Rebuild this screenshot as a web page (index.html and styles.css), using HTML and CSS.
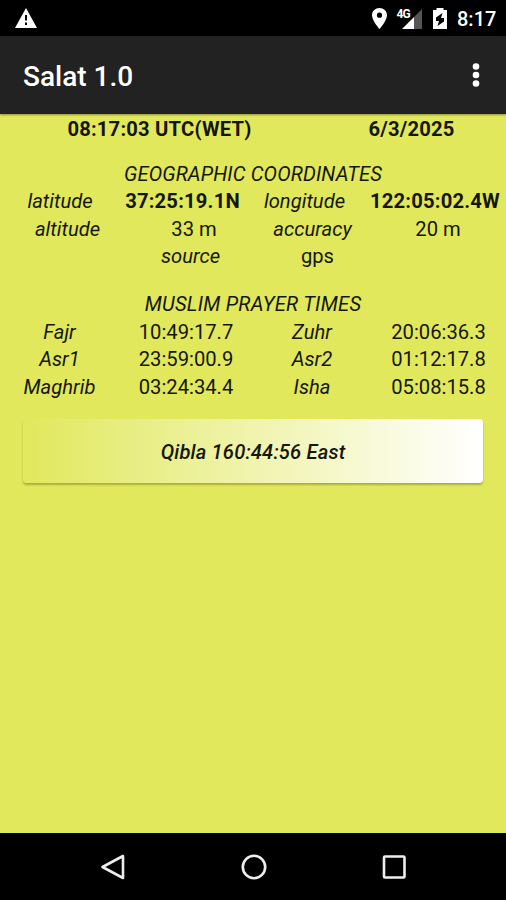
FILE: index.html
```html
<!DOCTYPE html>
<html lang="en">
<head>
<meta charset="utf-8">
<title>Salat 1.0</title>
<link rel="stylesheet" href="styles.css">
</head>
<body>
<div class="status">
  <svg class="warn" width="22" height="20" viewBox="0 0 22 20"><path fill="#fff" fill-rule="evenodd" d="M11 0L22 20H0ZM10 7V12.500H12V7ZM10 14.500V17H12V14.500Z"/></svg>
  <svg class="signals" width="78" height="24" viewBox="0 0 78 24">
    <path fill="#fff" fill-rule="evenodd" d="M7.500 2C3.400 2 0 5.100 0 9.200C0 14.500 7.500 23 7.500 23S15 14.500 15 9.200C15 5.100 11.600 2 7.500 2ZM7.500 6.600A2.600 2.600 0 1 1 7.500 11.800A2.600 2.600 0 1 1 7.500 6.600Z"/>
    <path fill="#555" d="M50 3V23H42V11Z"/>
    <path fill="#fff" d="M42 11V23H30Z"/>
    <text x="24.500" y="12" class="network">4G</text>
    <path fill="#fff" fill-rule="evenodd" d="M61 4H64.500V2H71.500V4H75V23H61ZM70.500 7L64 11.500V15H67L65.500 20L72 15.500V12H69Z"/>
  </svg>
  <span class="clock">8:17</span>
</div>
<header class="appbar">
  <h1>Salat 1.0</h1>
  <svg width="8" height="26" viewBox="0 0 8 26" fill="#fff"><circle cx="4" cy="4.500" r="3.300"/><circle cx="4" cy="13" r="3.300"/><circle cx="4" cy="21.500" r="3.300"/></svg>
</header>
<main>
  <div class="row time"><b>08:17:03 UTC(WET)</b><b>6/3/2025</b></div>
  <h2 class="geo">GEOGRAPHIC COORDINATES</h2>
  <div class="row position"><i>latitude</i><b>37:25:19.1N</b><i>longitude</i><b>122:05:02.4W</b></div>
  <div class="row altitude"><i>altitude</i><span>33 m</span><i>accuracy</i><span>20 m</span></div>
  <div class="row source"><i>source</i><span>gps</span></div>
  <h2 class="prayer">MUSLIM PRAYER TIMES</h2>
  <div class="row times"><i>Fajr</i><span>10:49:17.7</span><i>Zuhr</i><span>20:06:36.3</span></div>
  <div class="row times"><i>Asr1</i><span>23:59:00.9</span><i>Asr2</i><span>01:12:17.8</span></div>
  <div class="row times"><i>Maghrib</i><span>03:24:34.4</span><i>Isha</i><span>05:08:15.8</span></div>
  <button class="qibla">Qibla 160:44:56 East</button>
</main>
<nav>
  <svg width="26" height="28" viewBox="0 0 26 28"><path d="M23 3V25L2.500 14Z"/></svg>
  <svg width="26" height="28" viewBox="0 0 26 28"><circle cx="13" cy="14" r="11.200"/></svg>
  <svg width="26" height="28" viewBox="0 0 26 28"><rect x="3" y="3.500" width="20.500" height="21" rx="1"/></svg>
</nav>
</body>
</html>
```
FILE: styles.css
```css
* { box-sizing: border-box; }
body {
  margin: 0;
  height: 900px;
  display: flex;
  flex-direction: column;
  overflow: hidden;
  background: #e1e85c;
  color: #15160a;
  font-family: Roboto, sans-serif;
  font-size: 20.2px;
}
.status {
  height: 36px;
  flex: none;
  display: flex;
  align-items: center;
  padding: 0 10px 0 15px;
  background: #000;
  color: #fff;
}
.signals { margin-left: auto; margin-bottom: 1px; }
.network { font-size: 12px; font-weight: 700; fill: #fff; letter-spacing: -0.8px; }
.clock { width: 39px; margin-left: 7px; font-size: 20px; font-weight: 500; line-height: 36px; padding-top: 2px; white-space: nowrap; }
.appbar {
  height: 78px;
  flex: none;
  display: flex;
  align-items: center;
  justify-content: space-between;
  padding: 0 26px 0 23px;
  background: #222;
  color: #fff;
  box-shadow: 0 1px 2px rgba(0, 0, 0, .4);
}
.appbar h1 { margin: 3px 0 0; font-size: 28px; font-weight: 500; line-height: 40px; }
main { flex: 1; padding-top: 1px; }
.row { display: grid; height: 27.6px; line-height: 28px; text-align: center; white-space: nowrap; }
.row b { letter-spacing: 0.2px; }
.time { grid-template-columns: 319px 185px; }
.position { grid-template-columns: 120px 125px 119px 142px; }
.altitude { grid-template-columns: 135px 118px 119px 132px; }
.source { grid-template-columns: 125px 129px; padding-left: 128px; }
.times { grid-template-columns: 119px 134px 118px 135px; }
h2 { margin: 17px 0 0; height: 27.6px; font-size: 20.2px; font-weight: 400; font-style: italic; line-height: 28px; text-align: center; letter-spacing: 0.12px; }
h2.prayer { margin-top: 20px; letter-spacing: 0.24px; }
.qibla {
  display: block;
  width: 460px;
  height: 64px;
  margin: 19px 0 0 23px;
  padding: 1px 0 0;
  border: 0;
  border-radius: 4px;
  background: linear-gradient(90deg, #e1e85c, #fff);
  box-shadow: 0 2px 2px rgba(70, 70, 0, .35);
  color: #15160a;
  font: italic 500 20.2px Roboto, sans-serif;
  letter-spacing: 0.15px;
}
nav {
  height: 67px;
  flex: none;
  display: flex;
  justify-content: space-between;
  align-items: center;
  padding: 0 99px 0 100px;
  background: #000;
}
nav svg { fill: none; stroke: #eee; stroke-width: 2.6; stroke-linejoin: round; }
```
